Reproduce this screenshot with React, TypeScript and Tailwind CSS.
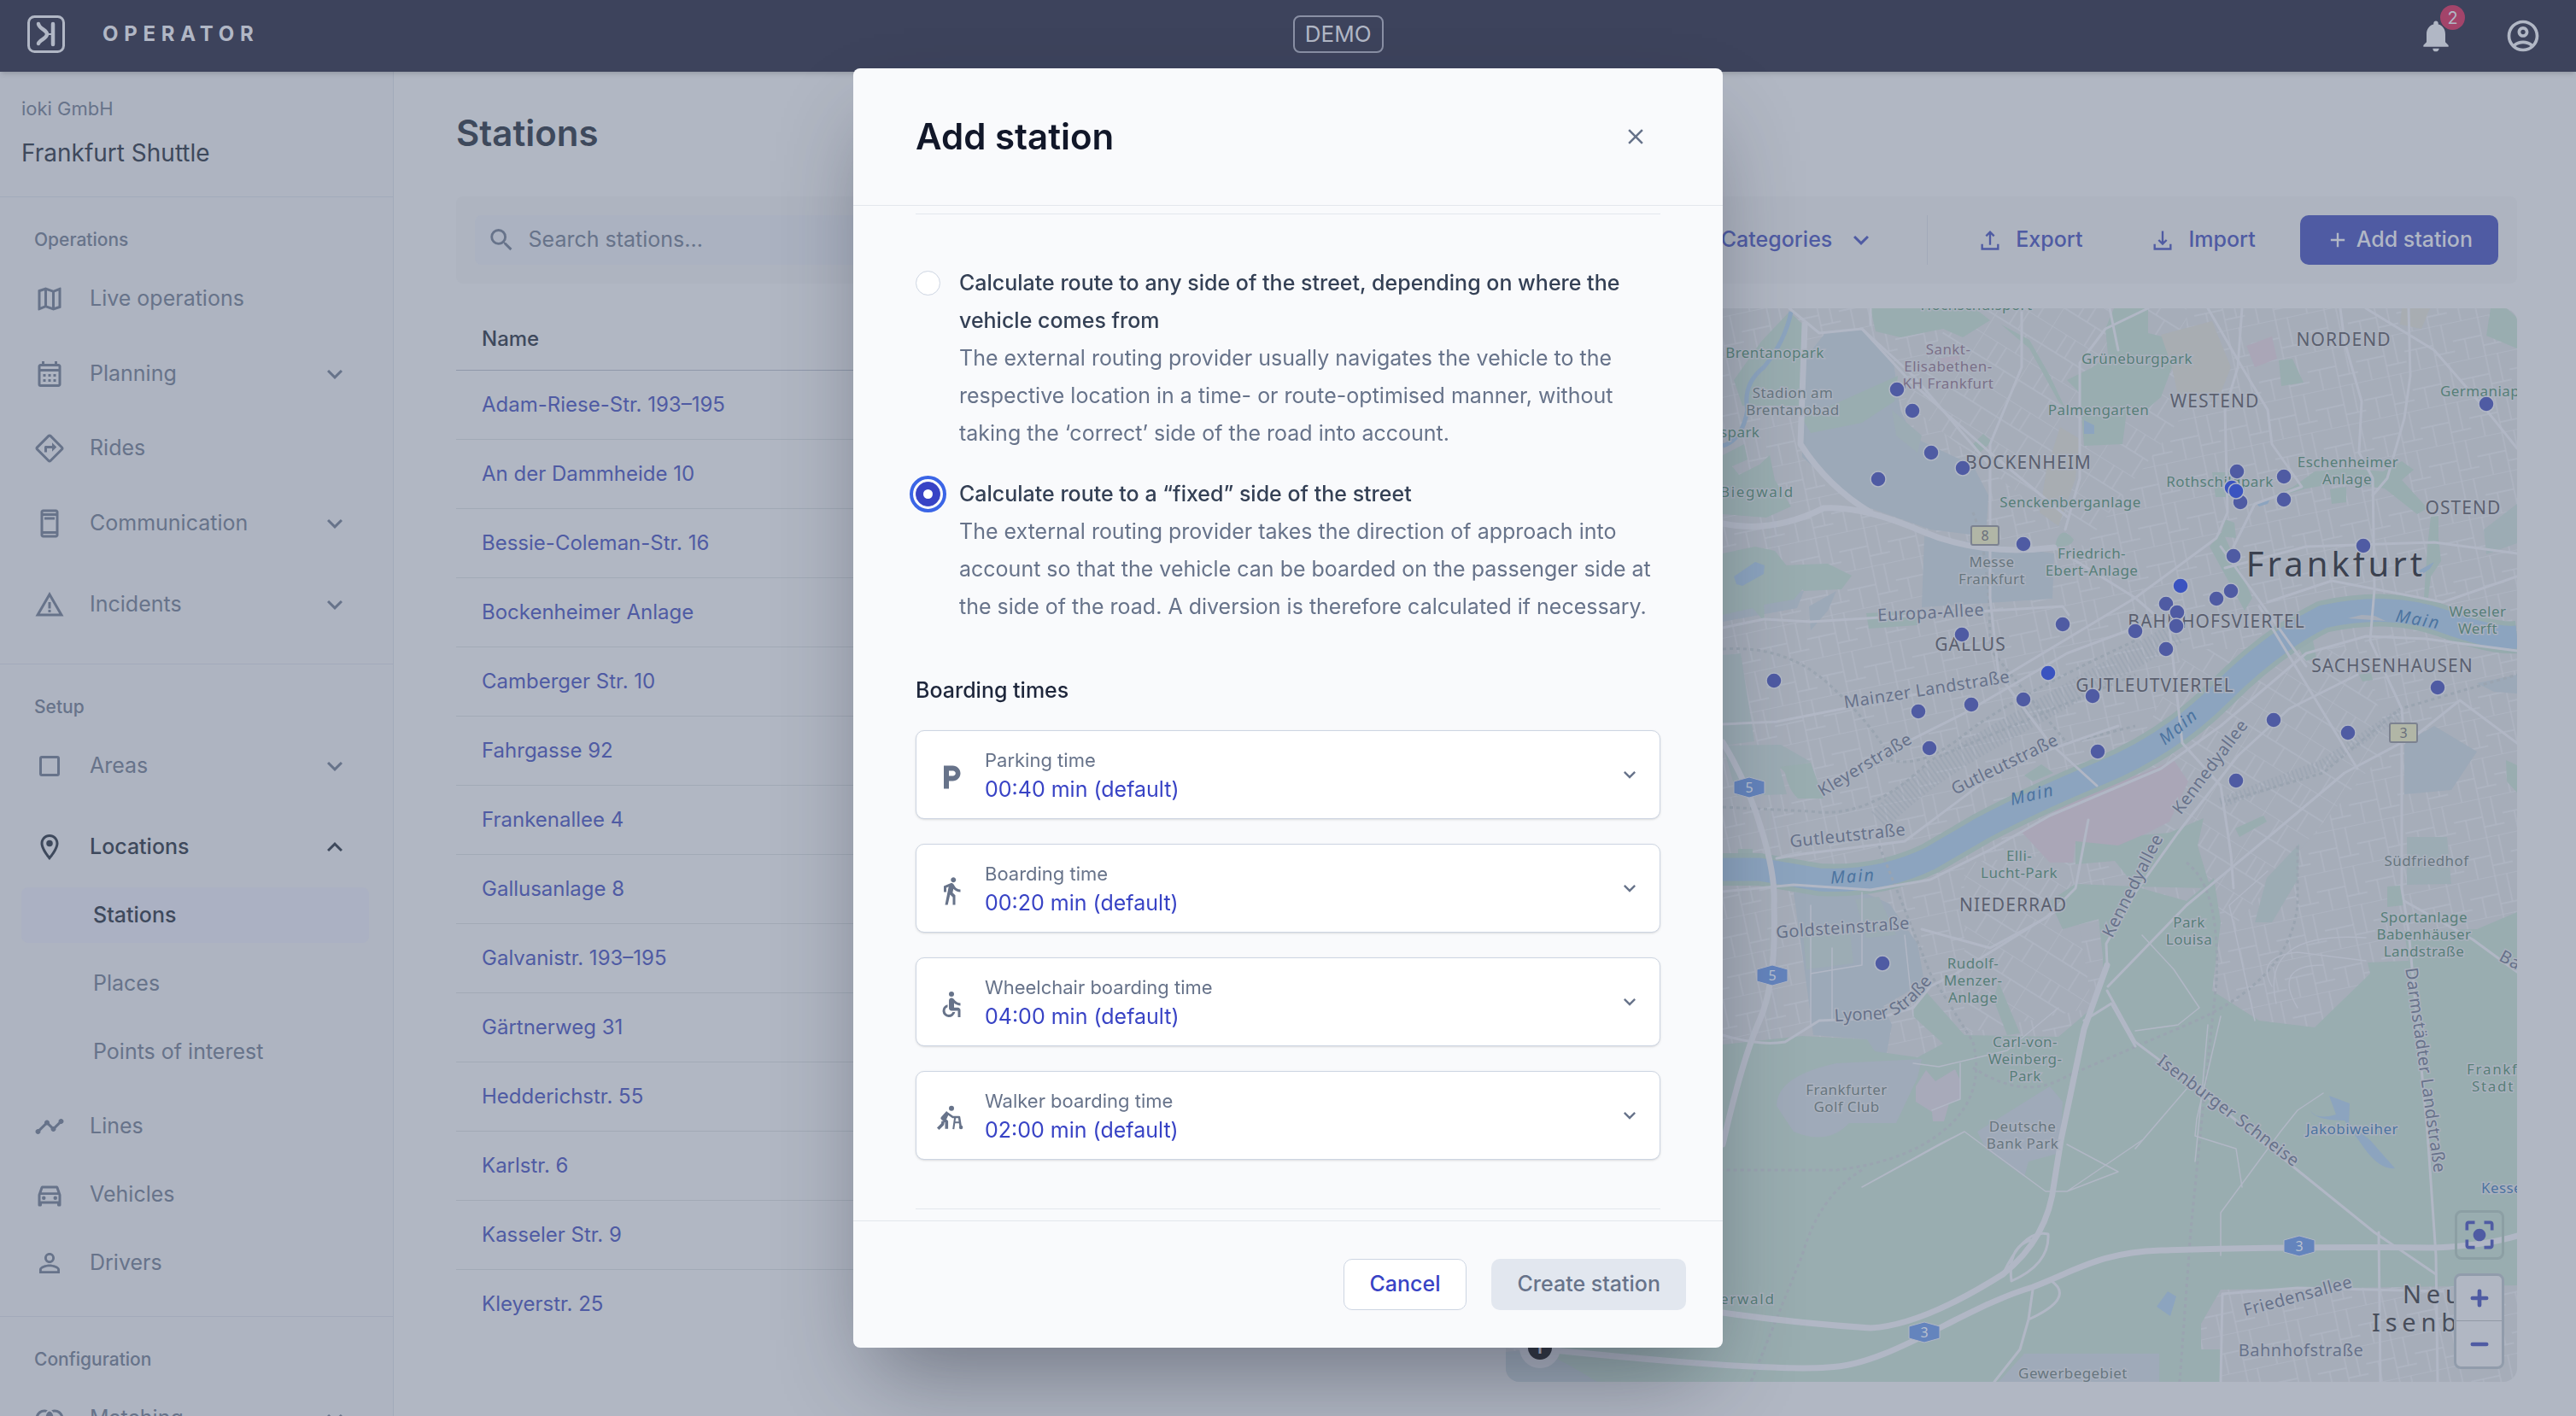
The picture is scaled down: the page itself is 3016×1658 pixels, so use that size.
import { useState } from "react";
import type { ReactNode } from "react";
import type { IconType } from "react-icons";
import {
  MdAccessible,
  MdAdd,
  MdCenterFocusStrong,
  MdClose,
  MdDirectionsWalk,
  MdJoinInner,
  MdKeyboardArrowDown,
  MdKeyboardArrowUp,
  MdLocalParking,
  MdNotifications,
  MdOutlineAccountCircle,
  MdOutlineAdUnits,
  MdOutlineCalendarMonth,
  MdOutlineDirections,
  MdOutlineDirectionsCar,
  MdOutlineLocationOn,
  MdOutlineMap,
  MdPersonOutline,
  MdSearch,
  MdTimeline,
  MdWarningAmber,
} from "react-icons/md";

const AreaIcon = ({ className }: { className?: string }) => (
  <svg viewBox="0 0 24 24" className={className} fill="none" stroke="currentColor" strokeWidth="2">
    <rect x="5" y="5" width="14" height="14" rx="1" />
  </svg>
);

const TrayIcon = ({ up }: { up?: boolean }) => (
  <svg viewBox="0 0 24 24" className="size-7" fill="none" stroke="currentColor" strokeWidth="2">
    <path d="M4 16v5h16v-5" />
    <path d={up ? "M12 17V4M8 8l4-4 4 4" : "M12 3v13M8 12l4 4 4-4"} />
  </svg>
);

const ZoomIcon = ({ plus }: { plus?: boolean }) => (
  <svg viewBox="0 0 24 24" className="size-7" fill="none" stroke="currentColor" strokeWidth="4" strokeLinecap="round">
    <path d={plus ? "M5 12h14M12 5v14" : "M5 12h14"} />
  </svg>
);

const WalkerIcon = ({ className }: { className?: string }) => (
  <svg viewBox="0 0 24 24" className={className} fill="none" stroke="currentColor" strokeLinejoin="round">
    <circle cx="12" cy="4.500" r="2" fill="currentColor" stroke="none" />
    <path d="M9 7.500L4.800 12.200l3.400 2.600V20.500M9 8L7 12.500M5.500 14.500L5 17l-3.500 3.500" strokeWidth="2.400" />
    <path d="M9 8.500l4 2.800h5l1.300 8.500" strokeWidth="1.700" />
    <path d="M14.800 11.500L13.500 20.700M14.500 15.500h4.500" strokeWidth="1.400" />
    <circle cx="19.400" cy="19.400" r="1.500" fill="currentColor" stroke="none" />
  </svg>
);

type Item = {
  label: string;
  icon: IconType | typeof AreaIcon;
  expandable?: boolean;
  open?: boolean;
  children?: string[];
};

const operations: Item[] = [
  { label: "Live operations", icon: MdOutlineMap },
  { label: "Planning", icon: MdOutlineCalendarMonth, expandable: true },
  { label: "Rides", icon: MdOutlineDirections },
  { label: "Communication", icon: MdOutlineAdUnits, expandable: true },
  { label: "Incidents", icon: MdWarningAmber, expandable: true },
];

const setup: Item[] = [
  { label: "Areas", icon: AreaIcon, expandable: true },
  {
    label: "Locations",
    icon: MdOutlineLocationOn,
    expandable: true,
    open: true,
    children: ["Stations", "Places", "Points of interest"],
  },
  { label: "Lines", icon: MdTimeline },
  { label: "Vehicles", icon: MdOutlineDirectionsCar },
  { label: "Drivers", icon: MdPersonOutline },
];

const configuration: Item[] = [{ label: "Matching", icon: MdJoinInner, expandable: true }];

const stations = [
  "Adam-Riese-Str. 193–195",
  "An der Dammheide 10",
  "Bessie-Coleman-Str. 16",
  "Bockenheimer Anlage",
  "Camberger Str. 10",
  "Fahrgasse 92",
  "Frankenallee 4",
  "Gallusanlage 8",
  "Galvanistr. 193–195",
  "Gärtnerweg 31",
  "Hedderichstr. 55",
  "Karlstr. 6",
  "Kasseler Str. 9",
  "Kleyerstr. 25",
];

const times = [
  { label: "Parking time", value: "00:40 min (default)", icon: MdLocalParking },
  { label: "Boarding time", value: "00:20 min (default)", icon: MdDirectionsWalk },
  { label: "Wheelchair boarding time", value: "04:00 min (default)", icon: MdAccessible },
  { label: "Walker boarding time", value: "02:00 min (default)", icon: WalkerIcon },
];

const routeOptions = [
  {
    id: "any",
    title: "Calculate route to any side of the street, depending on where the vehicle comes from",
    text: "The external routing provider usually navigates the vehicle to the respective location in a time- or route-optimised manner, without taking the ‘correct’ side of the road into account.",
  },
  {
    id: "fixed",
    title: "Calculate route to a “fixed” side of the street",
    text: "The external routing provider takes the direction of approach into account so that the vehicle can be boarded on the passenger side at the side of the road. A diversion is therefore calculated if necessary.",
  },
];

function Header() {
  return (
    <header className="relative z-10 flex h-[84px] shrink-0 items-center justify-between bg-[#3d435c] pr-10 pb-1 pl-8 text-[#b1b7c5] shadow-md">
      <div className="flex items-center gap-11">
        <svg viewBox="0 0 44 44" className="size-11" fill="none" stroke="currentColor" strokeWidth="3">
          <rect x="1.500" y="1.500" width="41" height="41" rx="7" />
          <path d="M30 10v24" strokeWidth="4.500" strokeLinecap="round" />
          <path d="M13 10c1 6 10 7 10 12S14 29 13 33" strokeWidth="4.500" strokeLinecap="round" />
          <path d="M24 22h5" strokeWidth="2" />
        </svg>
        <span className="text-2xl font-bold tracking-[0.28em]">OPERATOR</span>
      </div>
      <div className="rounded-lg border-2 border-[#8a90a5] px-3 text-[26px] leading-10">DEMO</div>
      <div className="flex items-center gap-[58px] pt-1">
        <button type="button" aria-label="Notifications" className="relative">
          <MdNotifications className="size-11" />
          <span className="absolute -top-3.5 -right-3 grid size-[29px] place-items-center rounded-full bg-[#a3446a] text-xl">2</span>
        </button>
        <button type="button" aria-label="Account">
          <MdOutlineAccountCircle className="size-11" />
        </button>
      </div>
    </header>
  );
}

function NavSection({ title, items, className }: { title: string; items: Item[]; className?: string }) {
  return (
    <section className="border-t border-[#a2aaba] pb-[22px]">
      <h2 className="px-10 pt-[30px] pb-px text-[21px] leading-10 font-medium">{title}</h2>
      <ul className={className}>
        {items.map(({ label, icon: Icon, expandable, open, children }) => (
          <li key={label} className={open ? "text-[#3e495c]" : ""}>
            <a href="#" className={`flex items-center px-10 ${expandable ? "h-[95px]" : "h-20"}`}>
              <Icon className="size-9 shrink-0" />
              <span className={`ml-[29px] grow ${open ? "font-medium" : ""}`}>{label}</span>
              {expandable && (open ? <MdKeyboardArrowUp className="mr-2.5 size-9" /> : <MdKeyboardArrowDown className="mr-2.5 size-9" />)}
            </a>
            {children && (
              <ul className="mb-[15px] flex flex-col gap-[15px] pl-[25px] text-[#67738a]">
                {children.map((child) => (
                  <li key={child}>
                    <a
                      href="#"
                      className={`mr-7 flex h-[65px] items-center rounded-lg pl-[84px] ${child === "Stations" ? "bg-[#abb1c3] font-medium text-[#3e495c]" : ""}`}
                    >
                      {child}
                    </a>
                  </li>
                ))}
              </ul>
            )}
          </li>
        ))}
      </ul>
    </section>
  );
}

function Sidebar() {
  return (
    <nav className="w-[461px] shrink-0 border-r border-[#a2aaba] bg-[#aeb4c1] text-[25px] text-[#67738a]">
      <div className="px-[25px] pt-[27px] pb-7">
        <p className="text-[22px] leading-8">ioki GmbH</p>
        <p className="mt-[13px] text-[28px] leading-[46px] text-[#3e495c]">Frankfurt Shuttle</p>
      </div>
      <NavSection title="Operations" items={operations} className="pt-2" />
      <NavSection title="Setup" items={setup} />
      <NavSection title="Configuration" items={configuration} />
    </nav>
  );
}

function Toolbar() {
  return (
    <div className="flex h-[102px] items-center rounded-lg bg-[#aeb4c0] px-[22px] text-[25px] font-medium text-[#4f5ba3]">
      <label className="flex h-[58px] flex-1 items-center gap-3.5 rounded-lg bg-[#abb2c1] px-3.5 font-normal text-[#67738a]">
        <MdSearch className="size-9" />
        <span className="sr-only">Search stations</span>
        <input type="search" placeholder="Search stations..." className="w-full bg-transparent placeholder:text-[#67738a] focus:outline-none" />
      </label>
      <div className="flex flex-1 items-center justify-end">
        <button type="button" className="flex items-center gap-4">
          Categories
          <MdKeyboardArrowDown className="size-9" />
        </button>
        <span className="mx-[59px] h-[58px] border-l border-[#a2aaba]" />
        <button type="button" className="flex items-center gap-4">
          <TrayIcon up />
          Export
        </button>
        <button type="button" className="mx-[52px] ml-20 flex items-center gap-4">
          <TrayIcon />
          Import
        </button>
        <button type="button" className="flex h-[58px] items-center gap-2 rounded-[10px] bg-[#4f5ba3] px-[30px] text-[#b1b7c5]">
          <MdAdd className="size-7" />
          Add station
        </button>
      </div>
    </div>
  );
}

function StationTable() {
  return (
    <table className="w-full self-start text-left text-2xl">
      <thead>
        <tr className="h-[72px] border-b border-[#8f98aa] text-[#3e495c]">
          <th scope="col" className="px-[30px] font-medium">
            Name
          </th>
        </tr>
      </thead>
      <tbody>
        {stations.map((name) => (
          <tr key={name} className="h-[81px] border-b border-[#a2aab6] last:border-0">
            <td className="px-[30px]">
              <a href="#" className="text-[#4f5ba3]">
                {name}
              </a>
            </td>
          </tr>
        ))}
      </tbody>
    </table>
  );
}

// map layers, all in the same canvas coordinates as the pins
const parks = [
  "M2475 361H2515V390L2535 395L2543 430L2530 465L2515 478L2490 482L2485 520L2440 522L2435 460L2420 445L2450 430L2468 415L2465 385Z",
  "M2095 365L2113 382L2108 475L2040 475L2030 445L2062 400Z",
  "M2110 490L2222 440L2218 470L2180 495L2120 507Z",
  "M2017 533L2042 520L2046 538L2028 546L2036 556L2060 544L2072 533L2078 562L2097 593L2068 606L2017 602Z",
  "M2190 361H2312L2330 375L2298 395L2275 385L2225 395L2196 388Z",
  "M2017 648L2055 640L2078 645L2112 688L2100 702L2065 708L2066 728L2052 712L2017 720Z",
  "M2088 662L2140 660L2168 674L2156 690L2112 692Z",
  "M2084 898L2120 893L2135 935H2105Q2094 925 2090 905Z",
  "M2408 632Q2415 615 2428 632Q2424 642 2406 640Z",
  "M2343 380L2376 398L2400 440L2418 478L2410 470L2376 408Z",
  "M2310 520L2322 508L2332 517L2318 530Z",
  "M2185 718L2245 715V732L2188 736Z",
  "M2668 422L2684 420L2697 448L2671 452Z",
  "M2587 640L2602 622L2637 700L2628 715Z",
  "M2600 628L2605 608L2616 612L2618 630Z",
  "M2590 553H2616L2612 582H2594Z",
  "M2640 590L2685 570L2710 552L2745 548L2790 552L2812 540L2826 550L2812 562L2842 595L2830 602L2792 572L2740 565L2700 572L2665 582Z",
  "M2846 605L2855 604V630L2858 657L2846 675L2843 700H2838L2842 640Z",
  "M2916 361H2935L2947 372V408L2911 393Z",
  "M2728 573L2747 570V588L2730 590Z",
  "M2690 757L2708 750L2712 770L2700 774Z",
  "M2762 790L2776 788L2778 796L2766 798Z",
  "M2617 970L2650 955L2654 962L2622 980Z",
  "M2934 890L2947 896V928L2935 915Z",
  "M2370 908L2390 895L2404 905L2380 915Z",
  "M2430 985L2540 975L2580 958L2573 990L2588 1040L2500 1038L2476 1008L2430 1012Z",
  "M2340 1150L2365 1210L2350 1212L2334 1170Z",
  "M2035 994H2052V1005H2035Z",
  "M2795 1038L2810 1037L2814 1060L2795 1062Z",
];

const paleParks = [
  "M2017 767L2038 765L2054 868L2017 873Z",
  "M2017 873L2085 872L2120 892L2084 900L2092 930L2034 932Z",
  "M2215 480L2250 510L2245 530L2220 510Z",
  "M2908 620L2947 590V636L2911 649Z",
  "M2654 1028L2692 988L2690 1030L2660 1080L2640 1080Z",
  "M2818 980H2865L2870 1035L2818 1036Z",
  "M2110 1085L2165 1080L2170 1128L2115 1135Z",
  "M2172 1053L2200 1050L2220 1095L2185 1098Z",
];

const works = [
  "M2113 420L2137 390L2180 385L2217 425L2225 480L2240 512L2310 545L2328 580L2325 628L2260 620L2170 588L2110 535Z",
  "M2253 628L2405 648L2403 701L2250 711Z",
  "M2100 1045H2182L2212 1058L2245 1105L2253 1150L2205 1178L2215 1200L2208 1238L2192 1230L2186 1217L2123 1212L2112 1130Z",
  "M2118 710L2150 692L2140 715L2120 738Z",
  "M2017 720L2070 695L2112 692L2104 712L2017 728Z",
  "M2815 870L2850 850L2900 880L2870 925L2815 930Z",
  "M2900 800L2947 790V812L2920 810Z",
  "M1763 1583L1815 1578L1870 1618H1763Z",
];

const forest =
  "M1763 1223H2017L2110 1213L2186 1217L2195 1231L2245 1238L2275 1222L2240 1190L2245 1150L2300 1212L2410 1214L2450 1180L2462 1150V1120L2457 1076L2415 1088L2400 1055L2430 1035L2500 1038L2560 1055L2592 1028L2600 1080L2590 1160L2645 1195L2710 1203L2775 1140L2772 1127L2820 1125L2815 1090L2900 1088L2947 1068V1505L2600 1510L2577 1550V1580H2600V1618H1870L1840 1600L1763 1560Z";

const motorways = [
  "M2017 869Q2045 915 2062 970T2077 1060Q2080 1150 2060 1195T2017 1340",
  "M1763 1575Q1900 1590 2000 1597T2140 1601C2210 1600 2300 1530 2380 1507C2430 1488 2460 1466 2530 1464Q2700 1459 2850 1461Q2910 1458 2947 1447",
  "M2017 613Q2075 625 2135 595Q2180 592 2250 622T2405 641",
  "M2017 1537Q2100 1549 2190 1555Q2250 1552 2345 1492",
  "M2345 1492Q2398 1450 2405 1385L2413 1335L2440 1205L2467 1130",
  "M2113 380L2108 520Q2140 570 2190 600",
];

const roads = [
  "M2095 361L2130 390L2180 385L2235 445L2330 530L2420 605",
  "M2190 380V361M2180 385L2240 440L2330 545",
  "M2467 1130L2466 1105L2500 1045L2550 975L2620 885L2680 830L2760 790",
  "M2405 641L2500 700L2540 735L2555 870L2600 920L2612 1000L2615 1040",
  "M2017 1044L2100 1036L2190 1042L2260 1030L2330 995L2400 955L2530 900L2600 850L2700 765L2770 745L2840 748L2947 762",
  "M2467 1160L2500 1220L2560 1265L2780 1443L2852 1492",
  "M2812 870L2812 1040L2820 1090L2842 1325L2852 1470L2854 1618",
  "M2815 1055L2895 1100L2947 1138",
  "M2440 1195L2472 1175L2500 1225M2468 1155L2560 1060L2650 985L2745 905L2830 860L2880 820L2947 870",
  "M2250 1088L2330 1110L2395 1075L2430 1040L2445 960",
  "M2017 1212Q2060 1225 2090 1220L2130 1195L2200 1192L2240 1180L2260 1155L2290 1140L2410 1065",
  "M2500 700L2595 630L2608 600L2605 480L2620 430L2625 361",
  "M2585 361L2625 430L2655 480L2660 520L2695 570L2640 590L2615 640",
  "M2740 361L2745 400L2765 470L2762 530L2778 560L2780 690L2775 750L2812 830L2815 870",
  "M2820 361L2822 440L2815 490L2795 560L2778 580M2770 361L2850 410L2915 485L2947 525",
  "M2017 735L2065 725L2120 728L2250 720L2415 710L2422 720",
  "M2605 665L2700 640L2850 635L2947 648",
  "M2655 705L2730 680L2860 705L2947 675",
  "M2645 710L2760 900M2600 640L2650 710L2700 780",
  "M2017 848L2080 845L2310 800L2350 790L2500 700",
  "M2140 915L2300 835L2420 765L2500 735",
  "M2785 1443L2787 1618M2600 1618L2602 1515L2690 1508L2860 1512",
  "M2080 1005L2110 1000L2230 985L2350 895L2480 850",
  "M2480 410L2470 361M2515 361L2465 385L2435 425L2435 560L2418 620",
  "M2367 361L2367 430L2330 520L2330 700L2340 790L2400 870L2455 920",
  "M2345 1492Q2370 1438 2398 1445Q2400 1480 2355 1500Q2350 1460 2378 1452M2380 1510L2375 1545L2365 1580L2335 1618M2375 1545Q2430 1520 2402 1500",
];

const lanes = [
  "M2300 1325L2180 1390L2270 1340L2300 1325L2395 1395L2420 1395L2508 1335M2420 1340L2480 1372L2420 1395",
  "M2240 1245L2270 1249L2350 1230L2410 1180M2295 1245V1287L2262 1300",
  "M2508 1095L2545 1135L2575 1180L2550 1200L2500 1207",
  "M2585 1200L2578 1280L2570 1360M2560 1275L2500 1345M2720 1280L2690 1300L2670 1325L2600 1420V1470",
  "M2600 1190L2572 1310L2570 1330L2618 1345L2625 1390M2640 1195L2610 1060L2655 1020",
  "M2660 1155Q2640 1120 2690 1115L2770 1125M2665 1175Q2645 1090 2770 1098M2690 1180Q2660 1130 2720 1130",
  "M2120 1060V1200M2145 1110V1195M2180 1045V1130L2120 1140M2230 1095L2240 1190",
];

const rails = [
  "M2017 760Q2090 755 2140 800T2215 890Q2250 900 2300 860T2500 750",
  "M2017 945L2120 950Q2190 960 2260 890L2500 790",
  "M2200 990L2260 1140L2310 1220Q2325 1280 2280 1320T2150 1370H2017",
  "M2180 1370Q2130 1400 2110 1470L2050 1618",
  "M2560 1010Q2600 1040 2595 1150L2580 1290L2565 1440L2552 1618",
  "M2600 940L2720 905L2810 830L2947 790",
  "M2310 1250Q2370 1290 2420 1260L2560 1200Q2680 1150 2690 1060V990",
  "M2310 600Q2330 650 2330 760L2420 870L2500 850",
];

type Label = { x: number; y: number; text: string; rotate?: number; start?: boolean };

const parkLabels: Label[] = [
  { x: 2314, y: 363, text: "Hochschulsport" },
  { x: 2078, y: 419, text: "Brentanopark" },
  { x: 2014, y: 512, text: "spark", start: true },
  { x: 2502, y: 426, text: "Grüneburgpark" },
  { x: 2457, y: 486, text: "Palmengarten" },
  { x: 2424, y: 594, text: "Senckenberganlage" },
  { x: 2449, y: 654, text: "Friedrich-" },
  { x: 2449, y: 674, text: "Ebert-Anlage" },
  { x: 2857, y: 464, text: "Germaniap", start: true },
  { x: 2749, y: 547, text: "Eschenheimer" },
  { x: 2748, y: 567, text: "Anlage" },
  { x: 2599, y: 570, text: "Rothschildpark" },
  { x: 2901, y: 722, text: "Weseler" },
  { x: 2901, y: 742, text: "Werft" },
  { x: 2364, y: 1008, text: "Elli-" },
  { x: 2364, y: 1028, text: "Lucht-Park" },
  { x: 2310, y: 1134, text: "Rudolf-" },
  { x: 2310, y: 1154, text: "Menzer-" },
  { x: 2310, y: 1174, text: "Anlage" },
  { x: 2371, y: 1226, text: "Carl-von-" },
  { x: 2371, y: 1246, text: "Weinberg-" },
  { x: 2371, y: 1266, text: "Park" },
  { x: 2838, y: 1080, text: "Sportanlage" },
  { x: 2838, y: 1100, text: "Babenhäuser" },
  { x: 2838, y: 1120, text: "Landstraße" },
  { x: 2563, y: 1086, text: "Park" },
  { x: 2563, y: 1106, text: "Louisa" },
];

const woodLabels: Label[] = [
  { x: 2014, y: 582, text: "Biegwald", start: true },
  { x: 2014, y: 1527, text: "erwald", start: true },
  { x: 2888, y: 1258, text: "Frankf", start: true },
  { x: 2894, y: 1278, text: "Stadt", start: true },
];

const siteLabels: Label[] = [
  { x: 2099, y: 466, text: "Stadion am" },
  { x: 2099, y: 486, text: "Brentanobad" },
  { x: 2332, y: 664, text: "Messe" },
  { x: 2332, y: 684, text: "Frankfurt" },
  { x: 2162, y: 1282, text: "Frankfurter" },
  { x: 2162, y: 1302, text: "Golf Club" },
  { x: 2368, y: 1325, text: "Deutsche" },
  { x: 2368, y: 1345, text: "Bank Park" },
  { x: 2427, y: 1614, text: "Gewerbegebiet" },
  { x: 2841, y: 1014, text: "Südfriedhof" },
];

const clinicLabels: Label[] = [
  { x: 2281, y: 415, text: "Sankt-" },
  { x: 2281, y: 435, text: "Elisabethen-" },
  { x: 2281, y: 455, text: "KH Frankfurt" },
];

const districtLabels: Label[] = [
  { x: 2375, y: 549, text: "BOCKENHEIM" },
  { x: 2307, y: 762, text: "GALLUS" },
  { x: 2523, y: 810, text: "GUTLEUTVIERTEL" },
  { x: 2744, y: 405, text: "NORDEND" },
  { x: 2593, y: 477, text: "WESTEND" },
  { x: 2884, y: 602, text: "OSTEND" },
  { x: 2595, y: 735, text: "BAHNHOFSVIERTEL" },
  { x: 2801, y: 787, text: "SACHSENHAUSEN" },
  { x: 2357, y: 1067, text: "NIEDERRAD" },
];

const streetLabels: Label[] = [
  { x: 2261, y: 724, text: "Europa-Allee", rotate: -3 },
  { x: 2257, y: 814, text: "Mainzer Landstraße", rotate: -9 },
  { x: 2187, y: 901, text: "Kleyerstraße", rotate: -31 },
  { x: 2350, y: 901, text: "Gutleutstraße", rotate: -26 },
  { x: 2164, y: 985, text: "Gutleutstraße", rotate: -6 },
  { x: 2593, y: 902, text: "Kennedyallee", rotate: -53 },
  { x: 2503, y: 1040, text: "Kennedyallee", rotate: -63 },
  { x: 2158, y: 1093, text: "Goldsteinstraße", rotate: -4 },
  { x: 2936, y: 1130, text: "Ba", rotate: 28 },
  { x: 2833, y: 1254, text: "Darmstädter Landstraße", rotate: 82 },
  { x: 2605, y: 1306, text: "Isenburger Schneise", rotate: 37 },
  { x: 2692, y: 1524, text: "Friedensallee", rotate: -15 },
  { x: 2694, y: 1588, text: "Bahnhofstraße" },
];

const waterLabels: Label[] = [
  { x: 2381, y: 937, text: "Main", rotate: -13 },
  { x: 2170, y: 1033, text: "Main", rotate: -4 },
  { x: 2830, y: 732, text: "Main", rotate: 10 },
  { x: 2555, y: 856, text: "Main", rotate: -40 },
];

const lakeLabels: Label[] = [
  { x: 2754, y: 1328, text: "Jakobiweiher" },
  { x: 2905, y: 1397, text: "Kesse", start: true },
];

const pins: [number, number, boolean?][] = [
  [2221, 456], [2239, 481], [2261, 530], [2298, 548], [2199, 561], [2369, 637], [2297, 743],
  [2415, 731], [2077, 797], [2398, 788, true], [2246, 833], [2308, 825], [2369, 819], [2259, 876],
  [2450, 815], [2456, 880], [2500, 739], [2911, 473], [2619, 552], [2623, 588], [2613, 571, true],
  [2618, 575, true], [2674, 558], [2674, 585], [2615, 651], [2767, 639], [2553, 686, true],
  [2612, 692], [2595, 701], [2536, 707], [2549, 717], [2548, 733], [2536, 760], [2854, 805],
  [2662, 843], [2749, 858], [2618, 914], [2204, 1128],
];

const Labels = ({ items, className }: { items: Label[]; className: string }) => (
  <g className={className}>
    {items.map(({ x, y, text, rotate, start }) => (
      <text key={`${x}-${y}`} x={x} y={y} textAnchor={start ? "start" : "middle"} transform={rotate ? `rotate(${rotate} ${x} ${y})` : undefined}>
        {text}
      </text>
    ))}
  </g>
);

const Paths = ({ items }: { items: string[] }) => (
  <>
    {items.map((d) => (
      <path key={d} d={d} />
    ))}
  </>
);

function StationMap() {
  return (
    <div className="relative overflow-hidden rounded-2xl bg-[#a6adb9]">
      <svg viewBox="1763 361 1184 1257" preserveAspectRatio="xMidYMid slice" className="absolute inset-0 size-full font-['Noto_Sans']">
        <defs>
          <pattern id="blocks-a" width="58" height="46" patternUnits="userSpaceOnUse" patternTransform="rotate(-12)">
            <path d="M0 0H58M0 22H34M34 0V46M14 22V46M34 34H58M48 0V34" fill="none" stroke="#b0b6c3" strokeWidth="1.300" />
          </pattern>
          <pattern id="blocks-b" width="64" height="50" patternUnits="userSpaceOnUse" patternTransform="rotate(32)">
            <path d="M0 0H64M0 25H64M20 0V25M44 25V50M0 0V50M32 0V25" fill="none" stroke="#b0b6c3" strokeWidth="1.300" />
          </pattern>
        </defs>
        <rect x="1763" y="361" width="1184" height="1257" fill="url(#blocks-a)" />
        <path d="M2290 361H2560V480L2440 640L2230 470ZM2560 760L2760 760L2800 870L2620 1080L2460 960ZM2300 1010L2420 1000L2450 1180L2300 1210Z" fill="#a6adb9" />
        <path d="M2290 361H2560V480L2440 640L2230 470ZM2560 760L2760 760L2800 870L2620 1080L2460 960ZM2300 1010L2420 1000L2450 1180L2300 1210Z" fill="url(#blocks-b)" />
        <g fill="#9ca9b8">
          <Paths items={works} />
        </g>
        <g fill="#9cacb4">
          <Paths items={paleParks} />
        </g>
        <g fill="#99adb0">
          <Paths items={parks} />
          <path d={forest} />
        </g>
        <g fill="#aaa6b7">
          <path d="M2390 962L2430 932L2510 905L2545 890L2562 915L2540 962L2515 975L2480 990L2430 985L2427 1010L2400 1010L2365 972Z" />
          <path d="M2630 405L2660 394L2666 420L2640 430ZM2270 420L2295 415L2292 432L2275 436Z" />
        </g>
        <g fill="#a8adb2">
          <path d="M2530 392L2590 376L2612 430L2600 460L2550 463L2543 430Z" />
          <path d="M2412 500L2435 514L2430 560L2410 616L2388 600L2396 550ZM2812 361H2845L2835 385L2810 380Z" />
        </g>
        <g fill="#9faab9">
          <path d="M2080 1295Q2080 1260 2150 1245L2250 1240L2245 1262L2220 1315H2165Q2140 1342 2100 1325Z" />
          <path d="M2315 1325L2400 1272L2415 1290L2412 1350L2375 1360L2370 1378L2325 1345Z" />
          <path d="M2370 1585H2528V1618H2340Z" />
        </g>
        <path d="M2243 1272L2255 1253L2266 1266L2289 1252L2295 1265V1287L2282 1292L2276 1313H2263L2262 1302L2243 1290Z" fill="#a8aaba" />
        <g fill="none" strokeLinejoin="round">
          <path d="M1763 1019L2060 1018L2130 1030Q2200 1034 2260 1005L2320 970Q2380 938 2460 905T2600 812T2720 722Q2800 705 2860 727T2947 746" stroke="#96abae" strokeWidth="38" />
          <path d="M1763 1019L2060 1018L2130 1030Q2200 1034 2260 1005L2320 970Q2380 938 2460 905T2600 812T2720 722Q2800 705 2860 727T2947 746" stroke="#8ca4bf" strokeWidth="27" />
          <path d="M2097 365Q2090 400 2065 430Q2040 450 2046 480Q2040 515 2017 522" stroke="#8ca4bf" strokeWidth="5" />
        </g>
        <g fill="#8ca4bf">
          <path d="M2030 675L2055 658L2066 662L2065 672L2040 686L2033 684Z" />
          <path d="M2440 492L2452 498V508L2440 508ZM2642 590L2658 584L2655 590L2645 593ZM2832 668L2850 658L2845 666L2835 673Z" />
          <path d="M2705 1300Q2712 1312 2735 1305L2727 1283L2751 1292L2750 1315L2775 1335L2804 1368Q2785 1370 2765 1340L2745 1312Q2710 1312 2705 1300Z" />
          <path d="M2525 1530L2538 1512L2548 1518L2541 1541Z" />
        </g>
        <path d="M2749 724L2765 720L2780 721L2793 727Z" fill="#a6adb9" />
        <g fill="none" stroke="#9aa4b0" strokeWidth="3" strokeDasharray="4 4">
          <Paths items={rails} />
          <path d="M2200 960Q2250 910 2330 865T2550 740" strokeWidth="26" strokeDasharray="2 3" opacity=".6" />
          <path d="M2600 940L2720 895L2810 835" strokeWidth="12" strokeDasharray="2 3" opacity=".6" />
        </g>
        <g fill="none" stroke="#b1b7c5" strokeLinejoin="round" strokeLinecap="round">
          <g strokeWidth="1.500">
            <Paths items={lanes} />
          </g>
          <g strokeWidth="3">
            <Paths items={roads} />
          </g>
          <g strokeWidth="7">
            <Paths items={motorways} />
          </g>
        </g>

        <g stroke="#aab1be" strokeWidth="3" className="[paint-order:stroke]">
          <Labels items={parkLabels} className="fill-[#577f78] text-[17px] tracking-wide" />
          <Labels items={woodLabels} className="fill-[#577f78] text-[17px] tracking-widest" />
          <Labels items={siteLabels} className="fill-[#67767f] text-[17px] tracking-wide" />
          <Labels items={clinicLabels} className="fill-[#7b7088] text-[17px] tracking-wide" />
          <Labels items={districtLabels} className="fill-[#5b606f] text-[21px] tracking-wider" />
          <Labels items={streetLabels} className="fill-[#67728a] text-[20px] tracking-wide" />
          <Labels items={waterLabels} className="fill-[#4c74a0] stroke-none text-[20px] tracking-widest italic" />
          <Labels items={lakeLabels} className="fill-[#4c74a0] text-[17px] tracking-wide" />
          <text className="fill-[#67728a] text-[20px]">
            <textPath href="#lyoner">Lyoner Straße</textPath>
          </text>
          <text x="2735" y="675" textAnchor="middle" className="fill-[#3b414f] text-[40px] tracking-widest">
            Frankfurt
          </text>
          <g className="fill-[#484e5b] text-[29px] tracking-[0.2em]">
            <text x="2813" y="1526">Neu</text>
            <text x="2777" y="1559">Isenb</text>
          </g>
        </g>
        <path id="lyoner" d="M2148 1196L2205 1193Q2236 1188 2275 1132" fill="none" />

        {[[2324, 627, 8], [2814, 858, 3]].map(([x, y, n]) => (
          <g key={x}>
            <rect x={x - 16} y={y - 11} width="32" height="22" rx="2" fill="#b1b6a6" stroke="#7c8290" strokeWidth="2" />
            <text x={x} y={y + 6} textAnchor="middle" className="fill-[#6a707c] text-[16px]">{n}</text>
          </g>
        ))}
        {[[2048, 922, 5], [2075, 1142, 5], [2253, 1560, 3], [2692, 1459, 3]].map(([x, y, n]) => (
          <g key={x}>
            <path d={`M${x - 18} ${y - 7}L${x} ${y - 12}L${x + 18} ${y - 7}V${y + 7}L${x} ${y + 12}L${x - 18} ${y + 7}Z`} fill="#6484bd" stroke="#b1b7c5" />
            <text x={x} y={y + 6} textAnchor="middle" className="fill-[#b9c0cf] text-[16px]">{n}</text>
          </g>
        ))}
        {pins.map(([x, y, active]) => (
          <circle key={`${x}-${y}`} cx={x} cy={y} r="9" fill={active ? "#3a53c0" : "#4f5ba3"} stroke="#b1b7c5" strokeWidth="1.500" />
        ))}
      </svg>

      <button type="button" aria-label="Map attribution" className="absolute bottom-4 left-4 grid size-12 place-items-center rounded-full bg-[#b1b7c5]">
        <span className="grid size-7 place-items-center rounded-full bg-[#2e333e] text-xl font-bold text-[#b1b7c5]">i</span>
      </button>
      <div className="absolute right-[15px] bottom-[15px] flex flex-col items-center gap-4 text-[#4f5ba3]">
        <button type="button" aria-label="Centre map" className="grid size-[58px] place-items-center rounded-lg border-[3px] border-[#8c9fa4]">
          <MdCenterFocusStrong className="size-11" />
        </button>
        <div className="flex flex-col divide-y divide-[#9299a6] overflow-hidden rounded-lg border-[3px] border-[#919cab] bg-[#b1b7c3]">
          <button type="button" aria-label="Zoom in" className="grid h-[53px] w-[53px] place-items-center">
            <ZoomIcon plus />
          </button>
          <button type="button" aria-label="Zoom out" className="grid h-[53px] w-[53px] place-items-center">
            <ZoomIcon />
          </button>
        </div>
      </div>
    </div>
  );
}

function Modal({ children }: { children: ReactNode }) {
  return (
    <div className="fixed inset-0 z-20 flex items-center justify-center py-20">
      <div
        role="dialog"
        aria-modal="true"
        aria-labelledby="modal-title"
        className="flex h-full w-full max-w-[1018px] flex-col overflow-hidden rounded-lg bg-[#f9fafc] shadow-[0_50px_100px_-24px_rgba(30,35,50,0.45)]"
      >
        {children}
      </div>
    </div>
  );
}

export default function App() {
  const [side, setSide] = useState("fixed");

  return (
    <div className="flex h-screen flex-col overflow-hidden bg-[#b1b7c3] font-['Inter',sans-serif]">
      <Header />
      <div className="flex min-h-0 grow">
        <Sidebar />
        <main className="flex grow flex-col pr-[69px] pb-10 pl-[73px]">
          <h1 className="pt-11 pb-[46px] text-[42px] leading-[56px] font-semibold text-[#3e495c]">Stations</h1>
          <Toolbar />
          <div className="mt-[29px] grid min-h-0 grow grid-cols-2 gap-[45px]">
            <StationTable />
            <StationMap />
          </div>
        </main>
      </div>

      <Modal>
        <div className="flex h-[161px] shrink-0 items-center justify-between border-b border-[#e3e7ed] pr-[87px] pl-[73px]">
          <h2 id="modal-title" className="text-[42px] leading-[56px] font-semibold text-[#111729]">
            Add station
          </h2>
          <button type="button" aria-label="Close" className="text-[#67738a]">
            <MdClose className="size-[30px]" />
          </button>
        </div>

        <div className="min-h-0 grow overflow-hidden px-[73px] pt-[9px]">
          <hr className="border-t border-[#e3e7ed]" />
          <fieldset className="mt-[58px] flex flex-col gap-[27px] text-[25px] leading-[44px] text-[#67738a]">
            {routeOptions.map(({ id, title, text }) => (
              <label key={id} className="flex gap-[22px]">
                <input
                  type="radio"
                  name="side"
                  checked={side === id}
                  onChange={() => setSide(id)}
                  className="mt-[8px] grid size-[29px] shrink-0 appearance-none place-items-center rounded-full border border-[#cdd5e2] bg-white before:size-[11px] before:rounded-full before:bg-white checked:border-[#3843c5] checked:bg-[#3843c5] checked:outline-4 checked:outline-offset-3 checked:outline-[#3b65e6]"
                />
                <span>
                  <span className="block font-medium text-[#344055]">{title}</span>
                  {text}
                </span>
              </label>
            ))}
          </fieldset>

          <h3 className="mt-[58px] text-[25px] leading-9 font-medium text-[#1e263b]">Boarding times</h3>
          <div className="mt-[29px] flex flex-col gap-[29px]">
            {times.map(({ label, value, icon: Icon }) => (
              <button
                key={label}
                type="button"
                className="flex h-[104px] items-center rounded-[10px] border border-[#cdd5e2] bg-white pr-[21px] pl-[23px] text-left text-[#67738a] shadow-sm"
              >
                <Icon className="mt-1.5 size-9 shrink-0" />
                <span className="ml-[21px] grow leading-[34px]">
                  <span className="block text-[22px]">{label}</span>
                  <span className="block text-[25px] text-[#3843c5]">{value}</span>
                </span>
                <MdKeyboardArrowDown className="size-7" />
              </button>
            ))}
          </div>
          <hr className="mt-[57px] border-t border-[#e3e7ed]" />
        </div>

        <div className="flex h-[149px] shrink-0 items-center justify-end gap-[29px] border-t border-[#e3e7ed] px-[43px] text-[25px] font-medium">
          <button type="button" className="h-[60px] rounded-[10px] border border-[#cdd5e2] bg-white px-[30px] text-[#3843c5]">
            Cancel
          </button>
          <button type="button" disabled className="h-[60px] rounded-[10px] bg-[#e2e7ef] px-[30px] text-[#67738a]">
            Create station
          </button>
        </div>
      </Modal>
    </div>
  );
}
